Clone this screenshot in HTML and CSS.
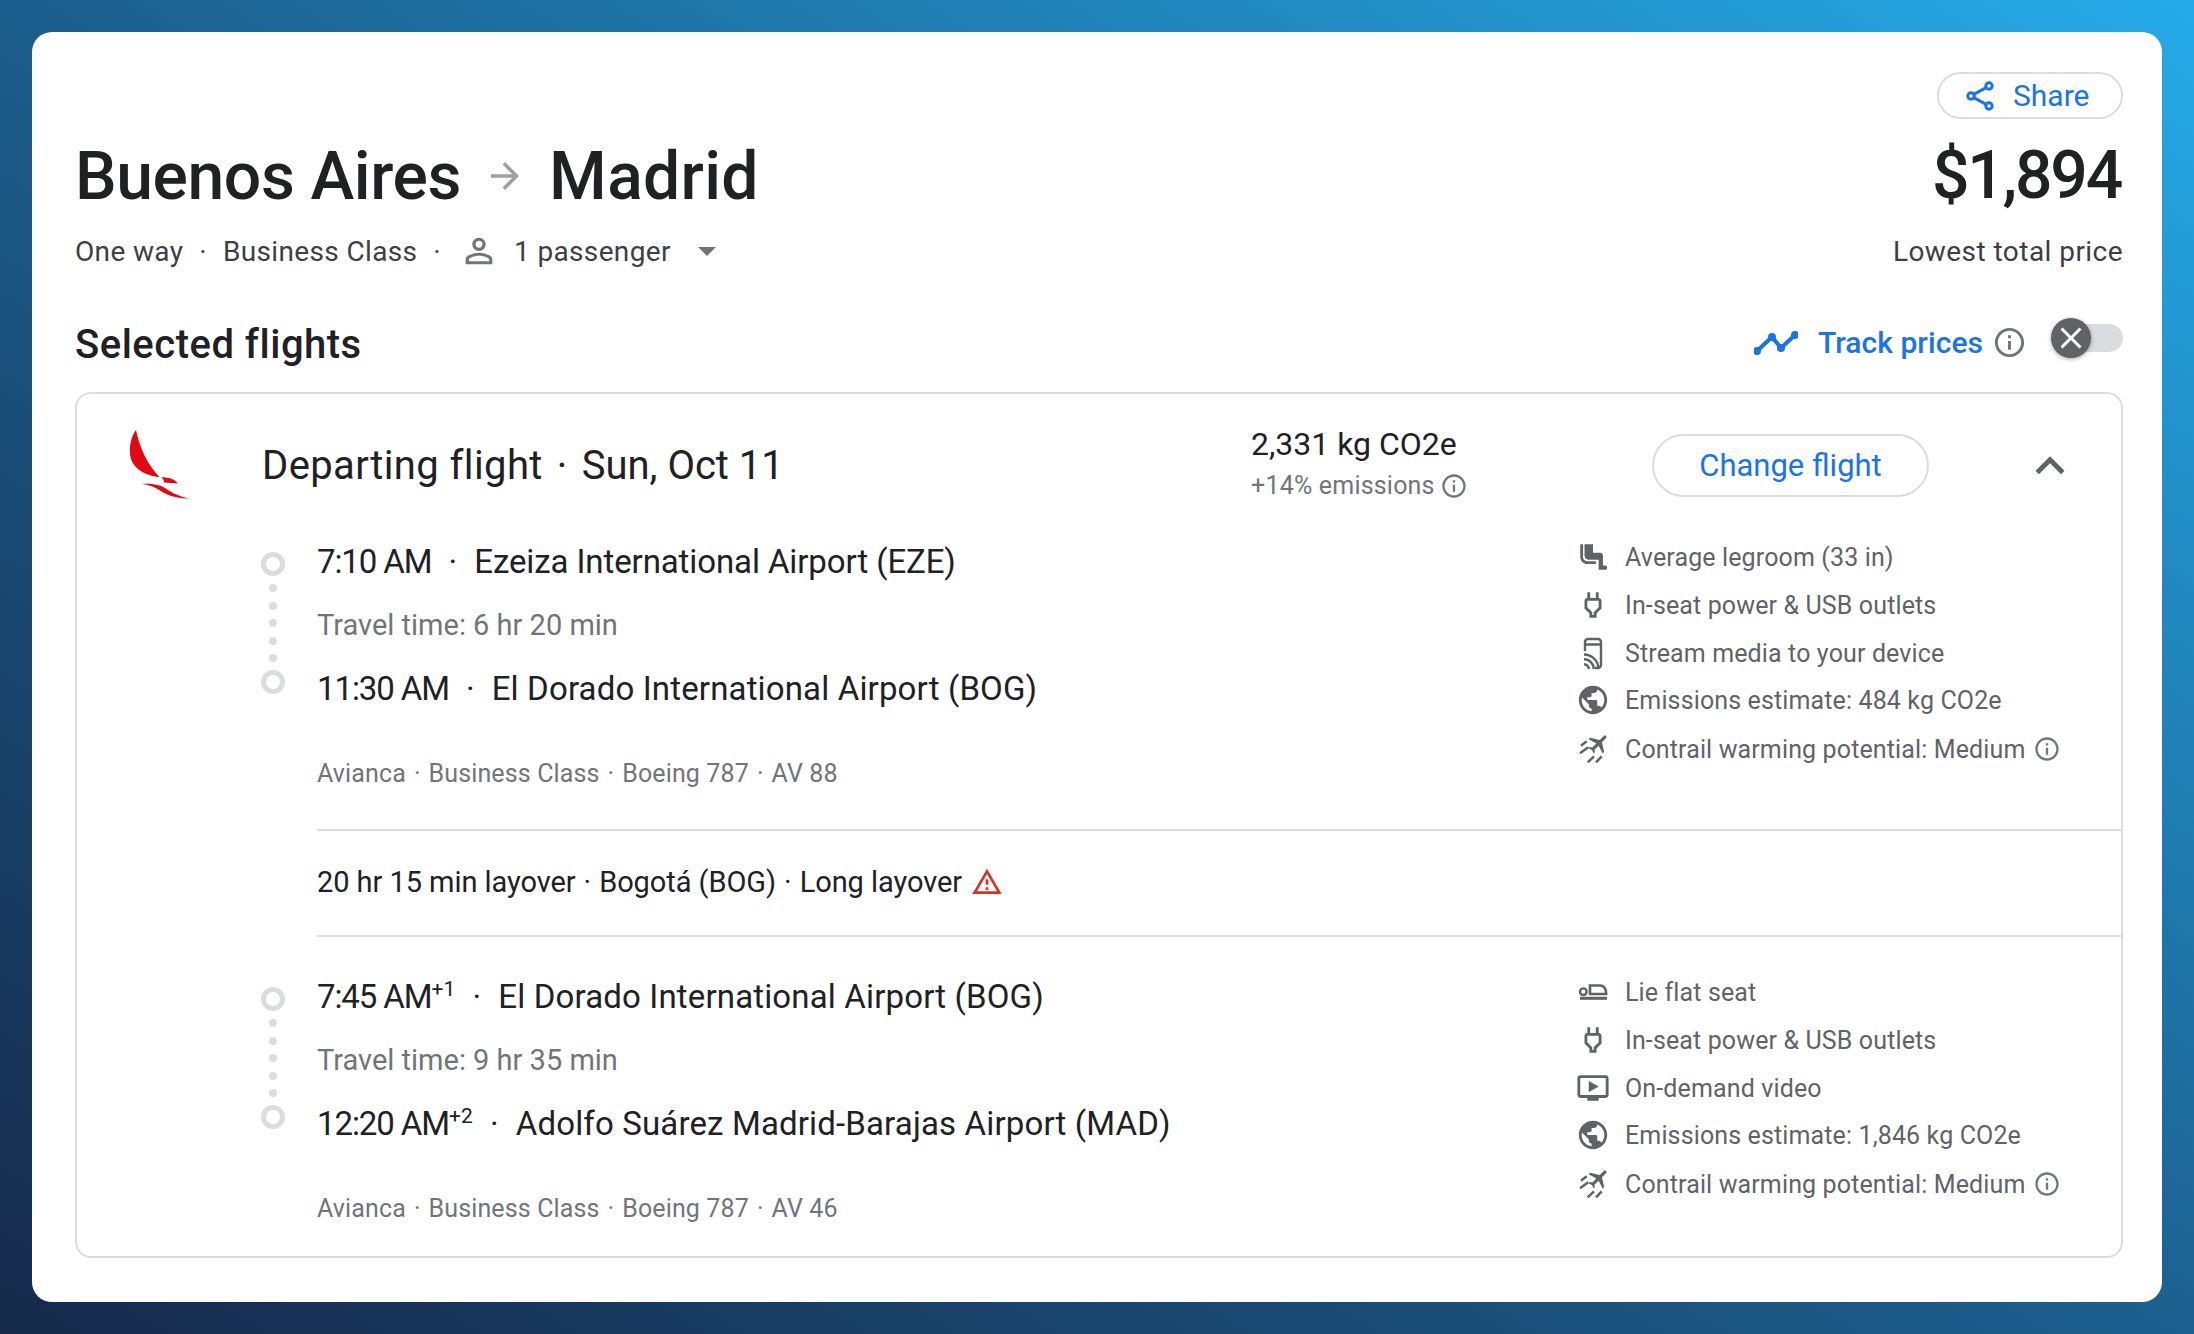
FILE: index.html
```html
<!DOCTYPE html>
<html lang="en">
<head>
    <meta charset="UTF-8">
    <meta name="viewport" content="width=device-width, initial-scale=1.0">
    <title>Buenos Aires to Madrid</title>
    <link rel="stylesheet" href="styles.css">
</head>
<body>
    <svg class="icon-defs" width="0" height="0">
        <symbol id="i-info" viewBox="0 0 24 24"><path d="M11 7h2v2h-2zm0 4h2v6h-2zm1-9C6.48 2 2 6.48 2 12s4.48 10 10 10 10-4.48 10-10S17.52 2 12 2zm0 18c-4.41 0-8-3.59-8-8s3.59-8 8-8 8 3.59 8 8-3.59 8-8 8z"/></symbol>
        <symbol id="i-power" viewBox="0 0 24 24"><path d="M16 7V3h-2v4h-4V3H8v4h-.01C6.9 7 6 7.9 6 8.99v5.49L9.5 18v3h5v-3l3.5-3.5V9c0-1.1-.9-2-2-2zm0 6.67l-3.5 3.51V19h-1v-1.82L8 13.65V9h8v4.67z"/></symbol>
        <symbol id="i-globe" viewBox="0 0 24 24"><path d="M12 2C6.48 2 2 6.48 2 12s4.48 10 10 10 10-4.48 10-10S17.52 2 12 2zm-1 17.93c-3.95-.49-7-3.85-7-7.93 0-.62.08-1.21.21-1.79L9 15v1c0 1.1.9 2 2 2v1.93zm6.9-2.54c-.26-.81-1-1.39-1.9-1.39h-1v-3c0-.55-.45-1-1-1H8v-2h2c.55 0 1-.45 1-1V7h2c1.1 0 2-.9 2-2v-.41c2.93 1.19 5 4.06 5 7.41 0 2.08-.8 3.97-2.1 5.39z"/></symbol>
        <symbol id="i-contrail" viewBox="0 0 34 34">
            <path transform="translate(22.6 11.4) rotate(45) scale(1.05) translate(-11.5 -12)" d="M21 16v-2l-8-5V3.500c0-.830-.670-1.500-1.500-1.500S10 2.670 10 3.500V9l-8 5v2l8-2.500V19l-2 1.500V22l3.500-1 3.500 1v-1.500L13 19v-5.500l8 2.500z"/>
            <path d="M5 13.700L10.700 9.300M4 21.300L12.300 15.300M11.700 30.300L18 24.300M20 30.300L25.700 24.300" fill="none" stroke="currentColor" stroke-width="2.500"/>
        </symbol>
    </svg>

    <main class="card">
        <header class="top">
            <div class="trip">
                <h1 class="route">
                    <span>Buenos Aires</span>
                    <svg class="route-arrow" viewBox="0 0 24 24"><path d="M12 4l-1.41 1.41L16.17 11H4v2h12.17l-5.58 5.59L12 20l8-8z"/></svg>
                    <span class="route-to">Madrid</span>
                </h1>
                <div class="trip-meta">
                    <span>One way</span>
                    <span class="dot">·</span>
                    <span>Business Class</span>
                    <span class="dot">·</span>
                    <svg class="person" viewBox="0 0 24 24"><path d="M12 5.9c1.16 0 2.1.94 2.1 2.1s-.94 2.1-2.1 2.1S9.9 9.16 9.9 8s.94-2.1 2.1-2.1m0 9c2.97 0 6.1 1.46 6.1 2.1v1.1H5.9V17c0-.64 3.13-2.1 6.1-2.1M12 4C9.79 4 8 5.79 8 8s1.79 4 4 4 4-1.79 4-4-1.79-4-4-4zm0 9c-2.67 0-8 1.34-8 4v3h16v-3c0-2.66-5.33-4-8-4z"/></svg>
                    <span>1 passenger</span>
                    <span class="caret"></span>
                </div>
            </div>
            <div class="pricing">
                <button class="share">
                    <svg class="share-icon line" viewBox="0 0 28 30" stroke="currentColor" stroke-width="3">
                        <circle cx="23" cy="5" r="3.200"/>
                        <circle cx="5" cy="15" r="3.200"/>
                        <circle cx="23" cy="25" r="3.200"/>
                        <path d="M20.200 6.600L7.800 13.400M7.800 16.600L20.200 23.400"/>
                    </svg>
                    Share
                </button>
                <div class="price">$1,894</div>
                <div class="price-label">Lowest total price</div>
            </div>
        </header>

        <div class="section-row">
            <h2 class="section-title">Selected flights</h2>
            <div class="track">
                <svg class="track-icon line" viewBox="0 0 44 24" stroke="currentColor" stroke-width="4" stroke-linecap="round" stroke-linejoin="round">
                    <path d="M3 20L18 6L27 17L41 4"/>
                    <circle cx="3" cy="20" r="2"/>
                    <circle cx="18" cy="6" r="2"/>
                    <circle cx="27" cy="17" r="2"/>
                    <circle cx="41" cy="4" r="2"/>
                </svg>
                <span class="track-label">Track prices</span>
                <svg class="info track-info"><use href="#i-info"/></svg>
                <div class="toggle">
                    <div class="toggle-knob">
                        <svg viewBox="0 0 24 24"><path d="M19 6.41L17.59 5 12 10.59 6.41 5 5 6.41 10.59 12 5 17.59 6.41 19 12 13.41 17.59 19 19 17.59 13.41 12z"/></svg>
                    </div>
                </div>
            </div>
        </div>

        <section class="flight-box">
            <div class="flight-head">
                <div class="logo-col">
                    <svg class="logo" viewBox="80 85 195 215">
                        <path d="M107 90C115 135 140 195 178 232C140 228 108 212 95 185C85 165 85 120 107 90Z"/>
                        <path d="M183 232C205 232 225 238 232 251L190 248C192 243 190 238 183 232Z"/>
                        <path d="M123 252C155 250 180 255 195 265C215 280 245 292 271 297C235 296 205 290 180 273C165 262 145 255 123 252Z"/>
                    </svg>
                </div>
                <div class="flight-title">Departing flight<span class="head-dot">·</span><span class="flight-date">Sun, Oct 11</span></div>
                <div class="emissions">
                    <div class="emissions-total">2,331 kg CO2e</div>
                    <div class="emissions-diff">+14% emissions <svg class="info"><use href="#i-info"/></svg></div>
                </div>
                <div class="change-col"><button class="change">Change flight</button></div>
                <svg class="chevron" viewBox="0 0 24 24"><path d="M12 8l-6 6 1.41 1.41L12 10.83l4.59 4.58L18 14z"/></svg>
            </div>

            <div class="leg">
                <div class="timeline">
                    <div class="stop"></div>
                    <div class="dots"><i></i><i></i><i></i><i></i><i></i></div>
                    <div class="stop"></div>
                </div>
                <div class="leg-info">
                    <div class="stop-line"><span class="time">7:10 AM</span><span class="sep">·</span><span class="airport-tight">Ezeiza International Airport (EZE)</span></div>
                    <div class="travel-time">Travel time: 6 hr 20 min</div>
                    <div class="stop-line"><span class="time">11:30 AM</span><span class="sep">·</span>El Dorado International Airport (BOG)</div>
                    <div class="leg-meta">Avianca<span class="mid">·</span>Business Class<span class="mid">·</span>Boeing 787<span class="mid">·</span>AV 88</div>
                </div>
                <ul class="amenities">
                    <li>
                        <svg class="am-icon" viewBox="0 0 24 24"><path d="M5 12V3H3v9c0 2.76 2.24 5 5 5h6v-2H8c-1.66 0-3-1.34-3-3zm15.5 6H19v-7c0-1.1-.9-2-2-2h-5V3H6v8c0 1.65 1.35 3 3 3h7v7h4.5c.83 0 1.5-.67 1.5-1.5s-.67-1.5-1.5-1.5z"/></svg>
                        <span>Average legroom (33 in)</span>
                    </li>
                    <li><svg class="am-icon"><use href="#i-power"/></svg><span>In-seat power &amp; USB outlets</span></li>
                    <li>
                        <svg class="am-icon line" viewBox="0 0 34 34" stroke="currentColor" stroke-width="2.400">
                            <path d="M9 15V6a3 3 0 0 1 3-3h10a3 3 0 0 1 3 3v23a3 3 0 0 1-3 3h-3M9 8.500h16"/>
                            <path d="M8 18.500A14.500 14.500 0 0 1 22.500 33M8 23.300A9.700 9.700 0 0 1 17.700 33M8 28.200A4.800 4.800 0 0 1 12.800 33"/>
                        </svg>
                        <span>Stream media to your device</span>
                    </li>
                    <li class="estimate"><svg class="am-icon"><use href="#i-globe"/></svg><span>Emissions estimate: 484 kg CO2e</span></li>
                    <li><svg class="am-icon"><use href="#i-contrail"/></svg><span>Contrail warming potential: Medium</span><svg class="info am-info"><use href="#i-info"/></svg></li>
                </ul>
            </div>

            <div class="layover">
                <span>20 hr 15 min layover<span class="lay-dot">·</span>Bogotá (BOG)<span class="lay-dot">·</span>Long layover</span>
                <svg class="warning" viewBox="0 0 24 24"><path d="M12 5.99L19.53 19H4.47L12 5.99M12 2L1 21h22L12 2zm1 14h-2v2h2v-2zm0-6h-2v4h2v-4z"/></svg>
            </div>

            <div class="leg">
                <div class="timeline">
                    <div class="stop"></div>
                    <div class="dots"><i></i><i></i><i></i><i></i><i></i></div>
                    <div class="stop"></div>
                </div>
                <div class="leg-info">
                    <div class="stop-line"><span class="time">7:45 AM</span><sup>+1</sup><span class="sep">·</span>El Dorado International Airport (BOG)</div>
                    <div class="travel-time">Travel time: 9 hr 35 min</div>
                    <div class="stop-line"><span class="time">12:20 AM</span><sup>+2</sup><span class="sep">·</span>Adolfo Suárez Madrid-Barajas Airport (MAD)</div>
                    <div class="leg-meta">Avianca<span class="mid">·</span>Business Class<span class="mid">·</span>Boeing 787<span class="mid">·</span>AV 46</div>
                </div>
                <ul class="amenities">
                    <li>
                        <svg class="am-icon line" viewBox="0 0 34 34" stroke="currentColor">
                            <circle cx="7.300" cy="16.700" r="3.300" stroke-width="2.400"/>
                            <path d="M14 10.500H24c4 0 6 3 6.200 8.500H14z" stroke-width="2.600"/>
                            <path d="M4 23.300H31" stroke-width="3"/>
                        </svg>
                        <span>Lie flat seat</span>
                    </li>
                    <li><svg class="am-icon"><use href="#i-power"/></svg><span>In-seat power &amp; USB outlets</span></li>
                    <li>
                        <svg class="am-icon" viewBox="0 0 24 24"><path d="M21 3H3c-1.110 0-2 .890-2 2v12c0 1.100.890 2 2 2h5v2h8v-2h5c1.100 0 1.990-.900 1.990-2L23 5c0-1.110-.900-2-2-2zm0 14H3V5h18v12zm-5-6l-7 4V7z"/></svg>
                        <span>On-demand video</span>
                    </li>
                    <li class="estimate"><svg class="am-icon"><use href="#i-globe"/></svg><span>Emissions estimate: 1,846 kg CO2e</span></li>
                    <li><svg class="am-icon"><use href="#i-contrail"/></svg><span>Contrail warming potential: Medium</span><svg class="info am-info"><use href="#i-info"/></svg></li>
                </ul>
            </div>
        </section>
    </main>
</body>
</html>
```

FILE: styles.css
```css
* {
    margin: 0;
    padding: 0;
    box-sizing: border-box;
}

body {
    width: 2194px;
    height: 1334px;
    padding: 32px;
    overflow: hidden;
    font-family: Roboto, "Liberation Sans", sans-serif;
    color: #202124;
    background: linear-gradient(32deg, #16294a 0%, #1c5f8e 50%, #25abe8 100%);
}

svg {
    fill: currentColor;
    flex: none;
}

svg.line {
    fill: none;
}

.icon-defs {
    display: block;
}

.card {
    width: 2130px;
    height: 1270px;
    padding: 40px 39px 44px 43px;
    background: #fff;
    border-radius: 20px;
}

.top {
    display: flex;
    justify-content: space-between;
}

.trip {
    padding-top: 64px;
}

.route {
    display: flex;
    align-items: center;
    height: 80px;
    font-size: 66px;
    font-weight: 500;
    letter-spacing: -0.4px;
}

.route-to {
    letter-spacing: 0.3px;
}

.route-arrow {
    width: 42px;
    height: 42px;
    margin: 0 23px 0 23px;
    color: #9aa0a6;
}

.trip-meta {
    display: flex;
    align-items: center;
    height: 36px;
    margin-top: 17px;
    font-size: 28px;
    letter-spacing: 0.35px;
    color: #3c4043;
}

.dot {
    margin: 0 16px;
}

.person {
    width: 40px;
    height: 40px;
    margin: 0 15px 0 2px;
    color: #70757a;
}

.caret {
    width: 0;
    height: 0;
    margin-left: 27px;
    border-left: 9px solid transparent;
    border-right: 9px solid transparent;
    border-top: 9px solid #70757a;
}

.pricing {
    display: flex;
    flex-direction: column;
    align-items: flex-end;
}

.share {
    display: flex;
    align-items: center;
    gap: 19px;
    width: 186px;
    height: 47px;
    padding-left: 27px;
    font-family: inherit;
    font-size: 30px;
    color: #1a73e8;
    background: #fff;
    border: 2px solid #dadce0;
    border-radius: 24px;
}

.share-icon {
    width: 28px;
    height: 30px;
}

.price {
    height: 80px;
    margin: 17px 2px 0 0;
    font-size: 66px;
    font-weight: 500;
    line-height: 80px;
    letter-spacing: -2.2px;
}

.price-label {
    height: 36px;
    margin-top: 18px;
    font-size: 28px;
    line-height: 36px;
    letter-spacing: 0.45px;
    color: #3c4043;
}

.section-row {
    display: flex;
    justify-content: space-between;
    align-items: center;
    height: 48px;
    margin-top: 49px;
}

.section-title {
    margin-top: 2px;
    font-size: 40px;
    font-weight: 500;
    letter-spacing: 0.5px;
}

.track {
    display: flex;
    align-items: center;
    margin-top: -1px;
    color: #1a73e8;
}

.track-icon {
    width: 44px;
    height: 24px;
}

.track-label {
    margin-left: 20px;
    font-size: 30px;
    font-weight: 500;
    letter-spacing: 0.05px;
}

.info {
    width: 28px;
    height: 28px;
    color: #70757a;
}

.track-info {
    width: 35px;
    height: 35px;
    margin-left: 9px;
}

.toggle {
    display: flex;
    align-items: center;
    width: 72px;
    height: 28px;
    margin: -9px 0 0 24px;
    padding-left: 10px;
    background: #dadce0;
    background-clip: content-box;
    border-radius: 14px;
}

.toggle-knob {
    display: flex;
    align-items: center;
    justify-content: center;
    width: 40px;
    height: 40px;
    margin-left: -10px;
    color: #fff;
    background: #5f6368;
    border-radius: 50%;
    box-shadow: 0 1px 4px rgba(0, 0, 0, 0.35);
}

.toggle-knob svg {
    width: 36px;
    height: 36px;
}

.flight-box {
    height: 866px;
    margin-top: 25px;
    border: 2px solid #dadce0;
    border-radius: 16px;
}

.flight-head {
    display: flex;
    align-items: center;
    height: 109px;
    padding: 40px 0 6px 50px;
}

.logo-col {
    width: 135px;
}

.logo {
    display: block;
    width: 65px;
    height: 72px;
    margin-top: -3px;
    fill: #e30613;
}

.flight-title {
    width: 989px;
    font-size: 40px;
    letter-spacing: 0.4px;
}

.flight-date {
    letter-spacing: 0;
}

.head-dot {
    margin: 0 14px;
}

.emissions {
    width: 401px;
}

.emissions-total {
    margin-top: -2px;
    font-size: 32px;
    line-height: 40px;
}

.emissions-diff {
    display: flex;
    align-items: center;
    gap: 5px;
    margin-top: 2px;
    font-size: 25px;
    line-height: 40px;
    letter-spacing: 0.2px;
    color: #70757a;
}

.change-col {
    width: 277px;
}

.change {
    width: 277px;
    height: 63px;
    font-family: inherit;
    font-size: 31px;
    color: #1a73e8;
    background: #fff;
    border: 2px solid #dadce0;
    border-radius: 32px;
}

.chevron {
    width: 58px;
    height: 58px;
    margin-left: 92px;
    color: #5f6368;
}

.leg {
    display: flex;
    padding: 37px 0 37px 184px;
}

.timeline {
    display: flex;
    flex-direction: column;
    width: 56px;
    padding-top: 12px;
}

.stop {
    width: 24px;
    height: 24px;
    border: 5px solid #dadce0;
    border-radius: 50%;
}

.dots {
    display: flex;
    flex-direction: column;
    gap: 9.5px;
    margin: 8px 0;
    padding-left: 8px;
}

.dots i {
    display: block;
    width: 8px;
    height: 8px;
    background: #dadce0;
    border-radius: 50%;
}

.leg-info {
    flex: 1;
}

.stop-line {
    height: 44px;
    font-size: 33px;
    line-height: 44px;
    letter-spacing: 0.15px;
}

.time {
    letter-spacing: -1.1px;
}

.airport-tight {
    letter-spacing: -0.1px;
}

.stop-line sup {
    font-size: 21px;
    line-height: 0;
}

.sep {
    margin: 0 17px;
}

.travel-time {
    height: 44px;
    margin: 19px 0 20px;
    font-size: 29px;
    line-height: 44px;
    color: #70757a;
}

.leg-meta {
    height: 36px;
    margin-top: 45px;
    font-size: 25px;
    line-height: 36px;
    letter-spacing: 0.13px;
    color: #70757a;
}

.mid {
    margin: 0 8px;
}

.amenities {
    width: 545px;
    margin-top: -7px;
    list-style: none;
    font-size: 25px;
    letter-spacing: 0.13px;
    color: #5f6368;
}

.amenities li {
    display: flex;
    align-items: center;
    height: 48px;
}

.amenities .estimate {
    margin: -1px 0 1px;
}

.am-icon {
    width: 34px;
    height: 34px;
    margin-right: 15px;
    color: #5f6368;
}

.am-info {
    margin-left: 8px;
}

.layover {
    display: flex;
    align-items: center;
    height: 108px;
    margin: 0 0 1px 240px;
    padding-bottom: 2px;
    font-size: 29px;
    letter-spacing: -0.06px;
    border-top: 2px solid #dadce0;
    border-bottom: 2px solid #dadce0;
}

.lay-dot {
    margin: 0 8px;
}

.warning {
    width: 32px;
    height: 32px;
    margin-left: 9px;
    fill: #d93025;
}
```
